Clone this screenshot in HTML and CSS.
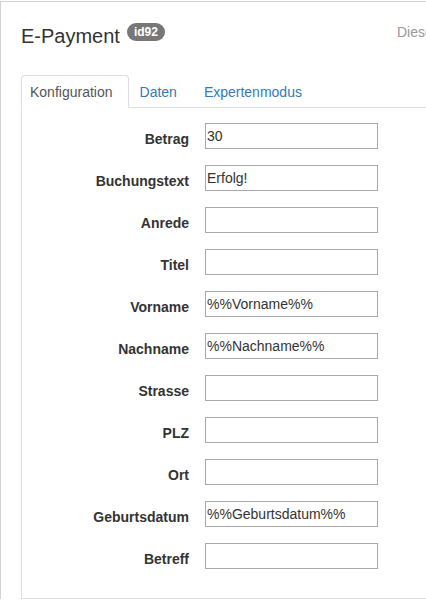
FILE: index.html
```html
<!DOCTYPE html>
<html lang="de">
<head>
<meta charset="utf-8">
<title>E-Payment</title>
<link rel="stylesheet" href="styles.css">
</head>
<body>
<div class="frame">
  <header class="head">
    <div class="title-block">
      <h1 class="title">E-Payment</h1>
      <span class="badge">id92</span>
    </div>
    <span class="hint">Dieses Modul ermöglicht die Bezahlung</span>
  </header>

  <ul class="tabs">
    <li class="tab active"><a>Konfiguration</a></li>
    <li class="tab"><a>Daten</a></li>
    <li class="tab"><a>Expertenmodus</a></li>
  </ul>

  <div class="pane">
    <form class="form">
      <div class="row"><label class="lbl">Betrag</label><input class="inp" type="text" value="30"></div>
      <div class="row"><label class="lbl">Buchungstext</label><input class="inp" type="text" value="Erfolg!"></div>
      <div class="row"><label class="lbl">Anrede</label><input class="inp" type="text" value=""></div>
      <div class="row"><label class="lbl">Titel</label><input class="inp" type="text" value=""></div>
      <div class="row"><label class="lbl">Vorname</label><input class="inp" type="text" value="%%Vorname%%"></div>
      <div class="row"><label class="lbl">Nachname</label><input class="inp" type="text" value="%%Nachname%%"></div>
      <div class="row"><label class="lbl">Strasse</label><input class="inp" type="text" value=""></div>
      <div class="row"><label class="lbl">PLZ</label><input class="inp" type="text" value=""></div>
      <div class="row"><label class="lbl">Ort</label><input class="inp" type="text" value=""></div>
      <div class="row"><label class="lbl">Geburtsdatum</label><input class="inp" type="text" value="%%Geburtsdatum%%"></div>
      <div class="row"><label class="lbl">Betreff</label><input class="inp" type="text" value=""></div>
    </form>
  </div>
</div>
</body>
</html>
```

FILE: styles.css
```css
html, body {
  margin: 0;
  padding: 0;
  background: #fff;
  overflow: hidden;
  height: 600px;
}
body {
  font-family: "Liberation Sans", Arial, sans-serif;
  font-size: 14px;
  color: #333;
}
.frame {
  margin-top: 1px;
  width: 900px;
  border-top: 1px solid #d2d2d2;
  border-left: 1px solid #d2d2d2;
  padding-left: 20px;
  box-sizing: border-box;
}
.head {
  display: flex;
  align-items: flex-start;
  padding-top: 21px;
}
.title-block {
  width: 376px;
  display: flex;
  align-items: flex-start;
  flex-shrink: 0;
}
.title {
  margin: 2px 0 0 0;
  font-size: 20px;
  line-height: 22px;
  font-weight: normal;
  color: #333;
}
.badge {
  margin-left: 7px;
  display: inline-block;
  padding: 3px 7px;
  font-size: 12px;
  line-height: 12px;
  font-weight: bold;
  color: #fff;
  background: #777;
  border-radius: 10px;
}
.hint {
  margin-top: -1px;
  line-height: 20px;
  color: #999;
  white-space: nowrap;
}
.tabs {
  list-style: none;
  margin: 28px 0 0 0;
  padding: 0;
  display: flex;
  border-bottom: 1px solid #ddd;
}
.tab {
  margin-bottom: -1px;
  margin-right: 2px;
}
.tab a {
  display: block;
  padding: 6px 15px 5px 8px;
  line-height: 20px;
  border: 1px solid transparent;
  border-radius: 4px 4px 0 0;
  color: #337ab7;
}
.tab.active a {
  color: #555;
  background: #fff;
  border-color: #ddd #ddd transparent #ddd;
}
.pane {
  border: 1px solid #ddd;
  border-top: none;
  height: 491px;
  box-sizing: border-box;
  padding-top: 15px;
}
.form {
  display: flex;
  flex-direction: column;
  gap: 16px;
}
.row {
  display: flex;
  align-items: flex-start;
  gap: 16px;
  height: 26px;
}
.lbl {
  width: 167px;
  height: 26px;
  box-sizing: border-box;
  text-align: right;
  padding-top: 7px;
  line-height: 19px;
  font-weight: bold;
  font-size: 14px;
  color: #333;
}
.inp {
  width: 173px;
  height: 26px;
  box-sizing: border-box;
  margin: 0;
  padding: 0 1px;
  border: 1px solid #a9a9a9;
  font-family: "Liberation Sans", Arial, sans-serif;
  font-size: 14px;
  color: #333;
  background: #fff;
  outline: none;
}
```
